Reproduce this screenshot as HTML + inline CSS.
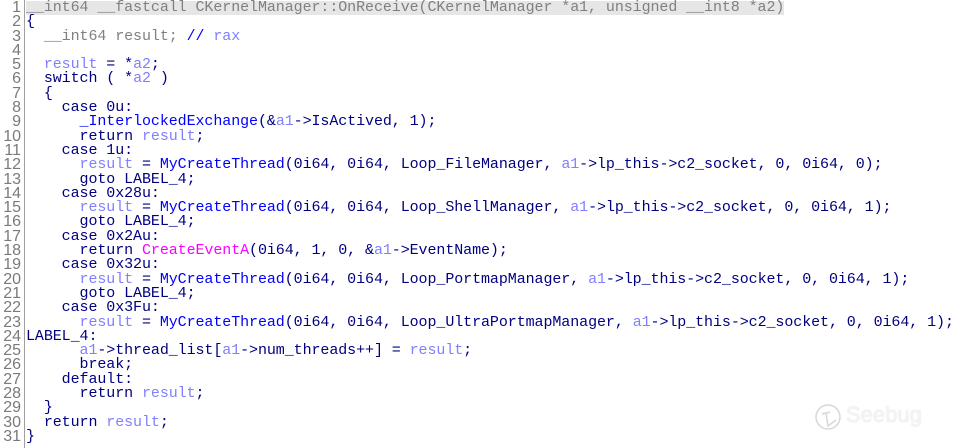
<!DOCTYPE html>
<html><head><meta charset="utf-8"><style>
html,body{margin:0;padding:0;background:#fff;width:960px;height:448px;overflow:hidden}
.g{position:absolute;left:0;top:0;width:24px;height:448px;border-right:1px solid #a0a0a0;background:#fff}
.ln{position:absolute;left:0;width:21px;text-align:right;font:16px "Liberation Sans",sans-serif;color:#7a7a7a;line-height:14.3px}
pre{position:absolute;left:26px;top:1px;margin:0;font-family:"Liberation Mono",monospace;font-size:15px;letter-spacing:-0.08px;line-height:14.3px;color:#000080}
.h{background:#e6e6e6;color:#808080;display:inline-block;width:758px}
.v{color:#8080ff}.f{color:#0000ff}.m{color:#ff00ff}.gr{color:#808080}.c{color:#0000ff}
.logo{position:absolute;left:846px;top:402px;font:22px "Liberation Sans",sans-serif;color:#f4f4f4;text-shadow:0 0 1px #d0d0d0}
</style></head><body>
<div class="g"></div>
<div class="ln" style="top:1px">1<br>2<br>3<br>4<br>5<br>6<br>7<br>8<br>9<br>10<br>11<br>12<br>13<br>14<br>15<br>16<br>17<br>18<br>19<br>20<br>21<br>22<br>23<br>24<br>25<br>26<br>27<br>28<br>29<br>30<br>31</div>
<pre><span class="h">__int64 __fastcall CKernelManager::OnReceive(CKernelManager *a1, unsigned __int8 *a2)</span>
{
  <span class="gr">__int64 result;</span> <span class="c">// </span><span class="v">rax</span>

  <span class="v">result</span> = *<span class="v">a2</span>;
  switch ( *<span class="v">a2</span> )
  {
    case 0u:
      <span class="f">_InterlockedExchange</span>(&amp;<span class="v">a1</span>-&gt;IsActived, 1);
      return <span class="v">result</span>;
    case 1u:
      <span class="v">result</span> = <span class="f">MyCreateThread</span>(0i64, 0i64, Loop_FileManager, <span class="v">a1</span>-&gt;lp_this-&gt;c2_socket, 0, 0i64, 0);
      goto LABEL_4;
    case 0x28u:
      <span class="v">result</span> = <span class="f">MyCreateThread</span>(0i64, 0i64, Loop_ShellManager, <span class="v">a1</span>-&gt;lp_this-&gt;c2_socket, 0, 0i64, 1);
      goto LABEL_4;
    case 0x2Au:
      return <span class="m">CreateEventA</span>(0i64, 1, 0, &amp;<span class="v">a1</span>-&gt;EventName);
    case 0x32u:
      <span class="v">result</span> = <span class="f">MyCreateThread</span>(0i64, 0i64, Loop_PortmapManager, <span class="v">a1</span>-&gt;lp_this-&gt;c2_socket, 0, 0i64, 1);
      goto LABEL_4;
    case 0x3Fu:
      <span class="v">result</span> = <span class="f">MyCreateThread</span>(0i64, 0i64, Loop_UltraPortmapManager, <span class="v">a1</span>-&gt;lp_this-&gt;c2_socket, 0, 0i64, 1);
LABEL_4:
      <span class="v">a1</span>-&gt;thread_list[<span class="v">a1</span>-&gt;num_threads++] = <span class="v">result</span>;
      break;
    default:
      return <span class="v">result</span>;
  }
  return <span class="v">result</span>;
}</pre>
<svg style="position:absolute;left:814px;top:402px" width="30" height="30" viewBox="0 0 30 30"><circle cx="14" cy="15" r="12" fill="none" stroke="#d8d8d8" stroke-width="1.5"/><path d="M8 12 L16 10 M12 11 L14 24 L22 18" fill="none" stroke="#d8d8d8" stroke-width="1.5"/></svg>
<div class="logo">Seebug</div>
</body></html>
